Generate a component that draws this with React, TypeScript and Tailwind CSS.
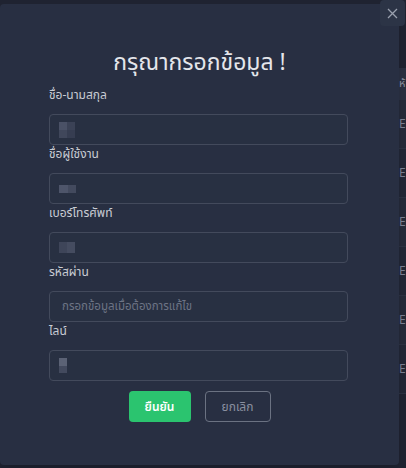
import React from 'react';

const font = { fontFamily: '"Noto Sans Thai", "Noto Sans", "DejaVu Sans", sans-serif' };

const fields = [
  { label: 'ชื่อ-นามสกุล', blur: 'a' },
  { label: 'ชื่อผู้ใช้งาน', blur: 'b' },
  { label: 'เบอร์โทรศัพท์', blur: 'c' },
  { label: 'รหัสผ่าน', placeholder: 'กรอกข้อมูลเมื่อต้องการแก้ไข' },
  { label: 'ไลน์', blur: 'd' },
];

const Blur = ({ kind }: { kind: string }) => {
  if (kind === 'a')
    return (
      <div className="grid grid-cols-2 w-[16px] h-[16px]">
        <div className="bg-[#4a5166]" />
        <div className="bg-[#3b4256]" />
        <div className="bg-[#40475b]" />
        <div className="bg-[#363d51]" />
      </div>
    );
  if (kind === 'b')
    return (
      <div className="flex w-[17px] h-[8px]">
        <div className="flex-1 bg-[#4e556a]" />
        <div className="flex-1 bg-[#434a5e]" />
      </div>
    );
  if (kind === 'c')
    return (
      <div className="flex w-[16px] h-[11px]">
        <div className="flex-1 bg-[#3e4559]" />
        <div className="flex-1 bg-[#454c60]" />
      </div>
    );
  return (
    <div className="flex flex-col w-[8px] h-[15px]">
      <div className="flex-1 bg-[#5b6275]" />
      <div className="flex-1 bg-[#434a5e]" />
    </div>
  );
};

export default function App() {
  return (
    <div className="relative w-[406px] h-[468px] overflow-hidden bg-[#1f2331]" style={font}>
      {/* background page table */}
      <div className="pt-[68px]">
        <div className="h-[32px] bg-[#2a3041] flex items-center justify-end text-[11px] text-[#8a90a0]">
          <span className="w-[7px] overflow-hidden">ห้</span>
        </div>
        {[0, 1, 2, 3, 4, 5].map((i) => (
          <div
            key={i}
            className={`h-[49px] border-b border-[#2c3242] flex items-center justify-end text-[12px] text-[#7b8193] ${
              i % 2 === 0 ? 'bg-[#252a39]' : 'bg-[#222736]'
            }`}
          >
            <span className="w-[7px] overflow-hidden">ES</span>
          </div>
        ))}
      </div>

      {/* modal */}
      <div className="absolute left-0 top-[4px] w-[399px] h-[461px] bg-[#282f42] rounded-[4px] shadow-lg flex flex-col">
        <h2 className="mt-[42px] text-center text-[23px] leading-[34px] text-[#e4e6eb] font-normal">
          กรุณากรอกข้อมูล !
        </h2>
        <div className="pl-[49px] pr-[51px] mt-[6px] flex flex-col">
          {fields.map((f) => (
            <div key={f.label} className="flex flex-col">
              <label className="h-[19px] leading-[19px] text-[12px] text-[#c9ccd4] mb-[9px]">{f.label}</label>
              <div className="h-[31px] border border-[#434a5c] rounded-[4px] bg-[#283042] flex items-center px-[9px]">
                {f.placeholder ? (
                  <span className="text-[11.5px] text-[#6d7485] pl-[3px]">{f.placeholder}</span>
                ) : (
                  <Blur kind={f.blur!} />
                )}
              </div>
            </div>
          ))}
        </div>
        <div className="mt-[10px] flex justify-center gap-[14px]">
          <button className="w-[62px] h-[31px] rounded-[4px] bg-[#2bc46f] text-white text-[12px] font-semibold">
            ยืนยัน
          </button>
          <button className="w-[66px] h-[31px] rounded-[4px] border border-[#6b7282] text-[#8a90a0] text-[12px]">
            ยกเลิก
          </button>
        </div>
      </div>

      {/* close button */}
      <button className="absolute right-[1px] top-0 w-[25px] h-[26px] rounded-[4px] bg-[#2c3446] flex items-center justify-center text-[#9aa0ae]">
        <svg width="11" height="11" viewBox="0 0 11 11" fill="none" stroke="currentColor" strokeWidth="1.3">
          <path d="M1 1 L10 10 M10 1 L1 10" />
        </svg>
      </button>
    </div>
  );
}
